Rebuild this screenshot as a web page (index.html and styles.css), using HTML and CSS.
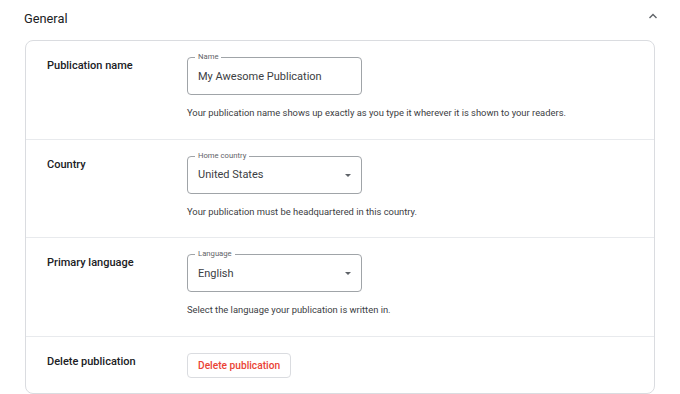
FILE: index.html
```html
<!DOCTYPE html>
<html>
<head>
<meta charset="utf-8">
<link rel="stylesheet" href="styles.css">
</head>
<body>
<div class="page">
  <div class="header">
    <h2 class="title">General</h2>
    <svg class="chevron" width="10" height="8" viewBox="0 0 10 8"><path d="M1.5 6 L5 2.5 L8.5 6" fill="none" stroke="#5f6368" stroke-width="1.4"/></svg>
  </div>
  <div class="card">
    <div class="row">
      <div class="label">Publication name</div>
      <div class="field-col">
        <div class="field">
          <span class="legend">Name</span>
          <span class="value">My Awesome Publication</span>
        </div>
        <div class="helper">Your publication name shows up exactly as you type it wherever it is shown to your readers.</div>
      </div>
    </div>
    <div class="row">
      <div class="label">Country</div>
      <div class="field-col">
        <div class="field">
          <span class="legend">Home country</span>
          <span class="value">United States</span>
          <span class="arrow"></span>
        </div>
        <div class="helper">Your publication must be headquartered in this country.</div>
      </div>
    </div>
    <div class="row">
      <div class="label">Primary language</div>
      <div class="field-col">
        <div class="field">
          <span class="legend">Language</span>
          <span class="value">English</span>
          <span class="arrow"></span>
        </div>
        <div class="helper">Select the language your publication is written in.</div>
      </div>
    </div>
    <div class="row row-last">
      <div class="label">Delete publication</div>
      <div class="field-col">
        <button class="danger">Delete publication</button>
      </div>
    </div>
  </div>
</div>
</body>
</html>
```
FILE: styles.css
```css
* { box-sizing: border-box; }
html, body { margin: 0; padding: 0; background: #fff; }
body { font-family: Roboto, "Noto Sans", Arial, sans-serif; color: #202124; }
.page { padding: 8px 25px 0 25px; }
.header { display: flex; justify-content: space-between; align-items: center; height: 20px; margin-bottom: 12px; }
.title { margin: 0; font-size: 12.8px; font-weight: 400; line-height: 20px; color: #202124; padding-top: 1px; padding-left: 0; margin-left: -1px; }
.chevron { margin-right: -3px; margin-top: -4px; }
.card { border: 1px solid #dadce0; border-radius: 8px; }
.row { display: grid; grid-template-columns: 140px 1fr; padding: 16px 21px 18.5px 21px; border-bottom: 1px solid #e8eaed; }
.row-last { border-bottom: none; padding-bottom: 15px; }
.label { font-size: 11px; font-weight: 500; line-height: 16px; padding-top: 1px; color: #202124; }
.field { position: relative; width: 175px; height: 38px; border: 1px solid #a0a4a8; border-radius: 4px; display: flex; align-items: center; padding-left: 10px; }
.legend { position: absolute; left: 7px; top: -6px; background: #fff; padding: 0 3px; font-size: 7.7px; line-height: 10px; color: #5f6368; }
.value { font-size: 11px; color: #3c4043; }
.arrow { position: absolute; right: 10px; top: 17px; width: 0; height: 0; border-left: 3.5px solid transparent; border-right: 3.5px solid transparent; border-top: 3.5px solid #5f6368; }
.helper { margin-top: 11px; font-size: 9.4px; line-height: 14px; color: #3c4043; }
.danger { font-family: inherit; height: 25px; padding: 0 10px; background: #fff; border: 1px solid #dadce0; border-radius: 4px; color: #ea4335; font-size: 10.2px; font-weight: 500; }
```
